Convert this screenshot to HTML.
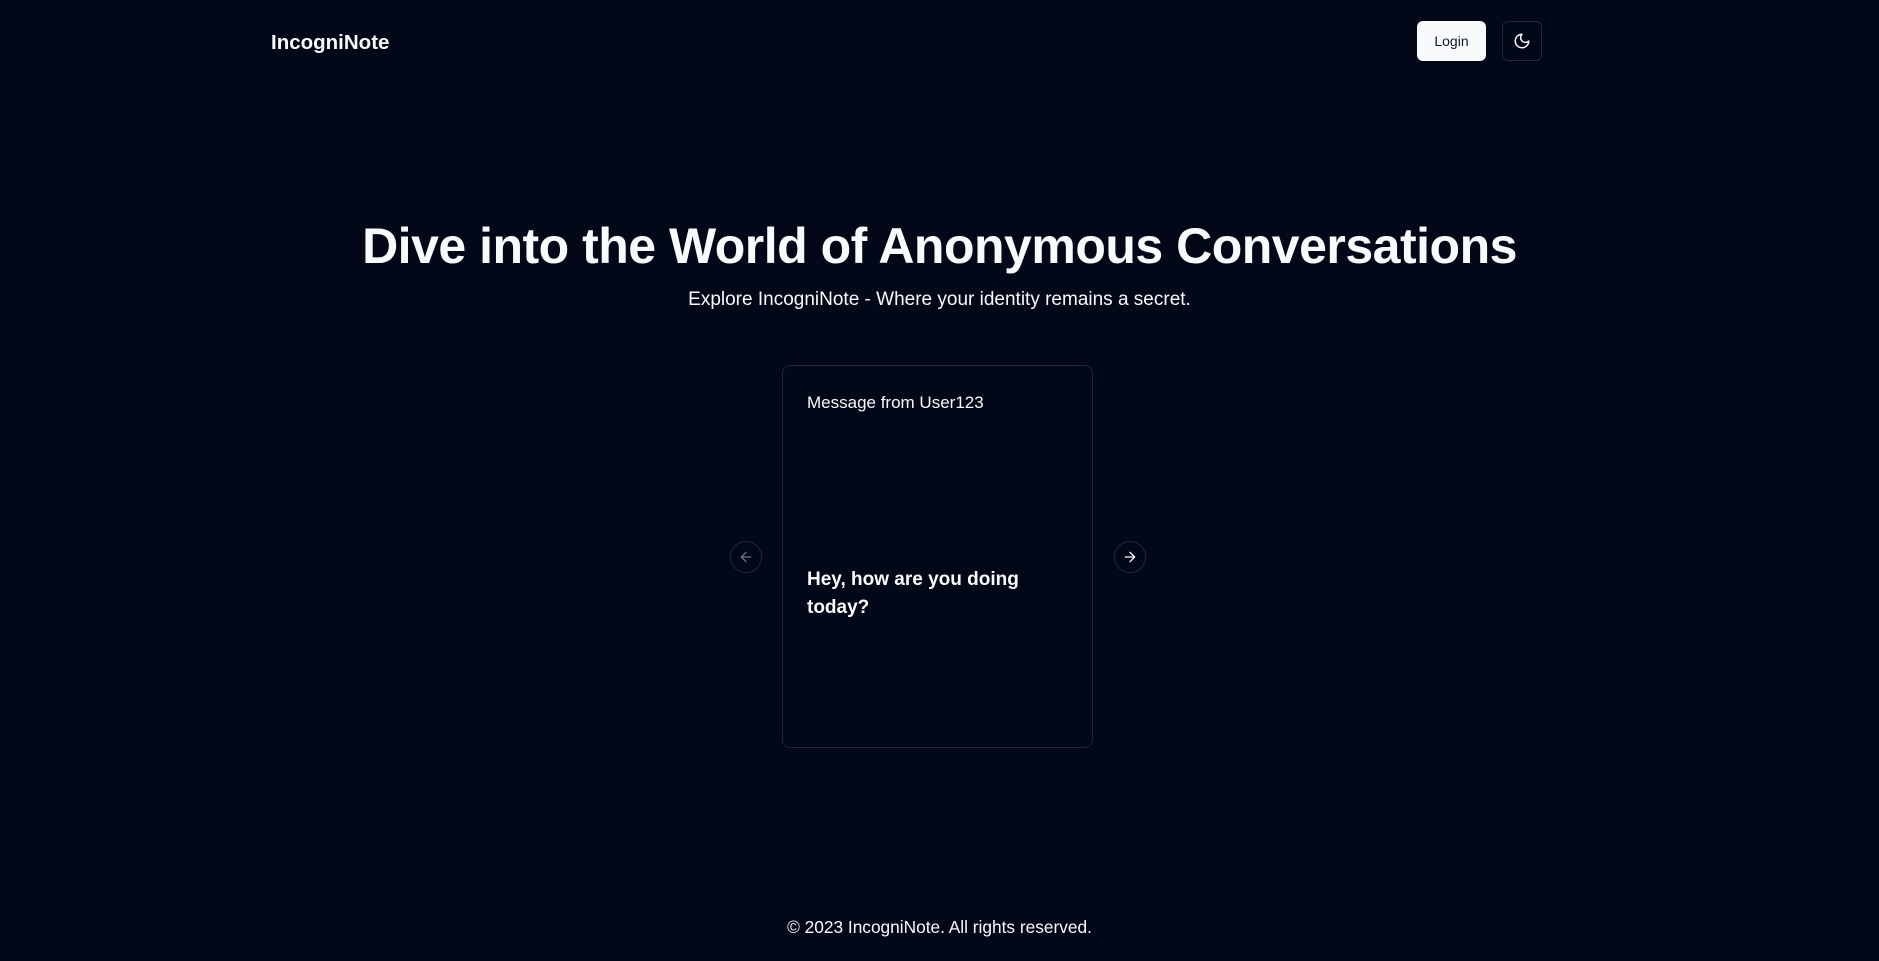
<!DOCTYPE html>
<html><head><meta charset="utf-8"><style>
*{box-sizing:border-box;margin:0;padding:0}
body{width:1879px;height:961px;background:#020817;color:#f8fafc;font-family:"Liberation Sans",sans-serif;position:relative;overflow:hidden}
.logo{position:absolute;left:271px;top:31px;font-size:20.5px;font-weight:bold}
.login{position:absolute;left:1417px;top:21px;width:69px;height:40px;background:#f8fafc;color:#0f172a;border-radius:6px;font-size:14px;display:flex;align-items:center;justify-content:center}
.theme{position:absolute;left:1502px;top:21px;width:40px;height:40px;border:1px solid #1e293b;border-radius:6px;display:flex;align-items:center;justify-content:center}
h1{position:absolute;left:0;width:1879px;top:217px;text-align:center;font-size:50px;font-weight:bold;letter-spacing:-0.5px}
.sub{position:absolute;left:0;width:1879px;top:289px;text-align:center;font-size:19px}
.card{position:absolute;left:782px;top:365px;width:311px;height:383px;border:1px solid #1e293b;border-radius:8px}
.ct{position:absolute;left:24px;top:27px;font-size:17px}
.cb{position:absolute;left:24px;top:200px;font-size:19px;font-weight:bold;line-height:28px;width:240px}
.nav{position:absolute;top:541px;width:32px;height:32px;border:1px solid #1e293b;border-radius:50%;display:flex;align-items:center;justify-content:center}
.foot{position:absolute;left:0;width:1879px;top:917px;text-align:center;font-size:17.3px}
</style></head><body>
<div class="logo">IncogniNote</div>
<div class="login">Login</div>
<div class="theme"><svg width="18" height="18" viewBox="0 0 24 24" fill="none" stroke="#f8fafc" stroke-width="2" stroke-linecap="round" stroke-linejoin="round"><path d="M12 3a6 6 0 0 0 9 9 9 9 0 1 1-9-9Z"/></svg></div>
<h1>Dive into the World of Anonymous Conversations</h1>
<div class="sub">Explore IncogniNote - Where your identity remains a secret.</div>
<div class="nav" style="left:730px"><svg width="16" height="16" viewBox="0 0 24 24" fill="none" stroke="#64748b" stroke-width="2" stroke-linecap="round" stroke-linejoin="round"><path d="m12 19-7-7 7-7M19 12H5"/></svg></div>
<div class="card"><div class="ct">Message from User123</div><div class="cb">Hey, how are you doing today?</div></div>
<div class="nav" style="left:1114px"><svg width="16" height="16" viewBox="0 0 24 24" fill="none" stroke="#f8fafc" stroke-width="2" stroke-linecap="round" stroke-linejoin="round"><path d="M5 12h14M12 5l7 7-7 7"/></svg></div>
<div class="foot">© 2023 IncogniNote. All rights reserved.</div>
</body></html>
